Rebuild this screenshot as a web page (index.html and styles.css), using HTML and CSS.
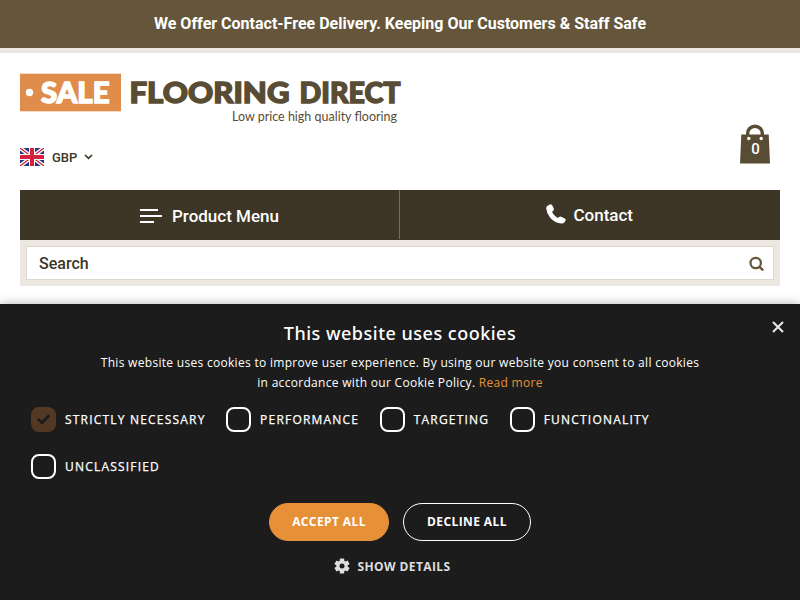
FILE: index.html
```html
<!DOCTYPE html>
<html lang="en">
<head>
	<meta charset="utf-8">
	<title>Sale Flooring Direct</title>
	<link rel="stylesheet" href="styles.css">
</head>
<body>
	<div class="promo-bar">We Offer Contact-Free Delivery. Keeping Our Customers &amp; Staff Safe</div>

	<header class="header">
		<a class="logo" href="#">
			<svg width="384" height="54" viewBox="0 0 384 54">
				<rect x="0" y="0.7" width="101" height="37.6" fill="#e08c4a"/>
				<circle cx="9.5" cy="19.5" r="3.7" fill="#fff"/>
				<text class="logo-name" x="21" y="30" textLength="68.5" lengthAdjust="spacingAndGlyphs" fill="#fff" stroke="#fff">SALE</text>
				<text class="logo-name" x="109.5" y="30" textLength="160" lengthAdjust="spacingAndGlyphs" fill="#594c34" stroke="#594c34">FLOORING</text>
				<text class="logo-name" x="279.5" y="30" textLength="101" lengthAdjust="spacingAndGlyphs" fill="#594c34" stroke="#594c34">DIRECT</text>
				<text class="logo-tag" x="212" y="48" textLength="165" lengthAdjust="spacingAndGlyphs" fill="#594c34">Low price high quality flooring</text>
			</svg>
		</a>

		<div class="tools">
			<div class="currency">
				<svg class="flag" width="24" height="18" viewBox="0 0 24 18">
					<rect width="24" height="18" fill="#29337a"/>
					<path d="M0 0L24 18M24 0L0 18" stroke="#fff" stroke-width="4"/>
					<path d="M0 0L24 18M24 0L0 18" stroke="#d3233f" stroke-width="1.3"/>
					<path d="M12 0V18M0 9H24" stroke="#fff" stroke-width="6"/>
					<path d="M12 0V18M0 9H24" stroke="#d3233f" stroke-width="4"/>
				</svg>
				<span>GBP</span>
				<svg width="9" height="6" viewBox="0 0 9 6"><path d="M1 1L4.5 4.4L8 1" fill="none" stroke="#3d3525" stroke-width="1.7"/></svg>
			</div>
			<a class="basket" href="#">
				<svg width="30" height="40" viewBox="0 0 30 40">
					<path d="M7.7 14V9.2a7.3 7 0 0 1 14.6 0V14" fill="none" stroke="#594c34" stroke-width="3.4"/>
					<path d="M1.3 10.5H28.7L30 39.5H0Z" fill="#594c34"/>
					<circle cx="8.8" cy="14.5" r="1.7" fill="#fff"/>
					<circle cx="21.2" cy="14.5" r="1.7" fill="#fff"/>
				</svg>
				<span class="basket-count">0</span>
			</a>
		</div>

		<nav class="nav">
			<a class="nav-item nav-menu" href="#">
				<svg width="22" height="14" viewBox="0 0 22 14"><path d="M0 1H18M0 7H22M0 13H14" stroke="#fff" stroke-width="2"/></svg>
				<span>Product Menu</span>
			</a>
			<a class="nav-item nav-contact" href="#">
				<svg width="20" height="20" viewBox="0 0 20 20"><path d="M1.2 1.9L3.8 0.4Q5.2 0 6 1.1L7.8 4.5Q8.2 5.7 7.4 6.5L6 8Q7.8 11.6 11.5 13.9L13.4 12.8Q14.2 12.3 15.1 12.7L18.9 14.6Q20 15.3 19.6 16.5L18.3 18.6Q17.5 19.6 15.4 19.5Q9 19 4.4 13.9Q0.5 9.2 0.2 4.4Q0.2 2.7 1.2 1.9Z" fill="#fff"/></svg>
				<span>Contact</span>
			</a>
		</nav>

		<form class="search">
			<div class="search-box">
				<span>Search</span>
				<svg width="15" height="15" viewBox="0 0 15 15"><circle cx="6.7" cy="7" r="5.2" fill="none" stroke="#65563b" stroke-width="2.2"/><path d="M10.3 10.6L14.2 14.4" stroke="#65563b" stroke-width="2.5"/></svg>
			</div>
		</form>
	</header>

	<div class="cookie">
		<button class="cookie-close" type="button" aria-label="Close">
			<svg width="12" height="12" viewBox="0 0 12 12"><path d="M1 1L11 11M11 1L1 11" stroke="#e6e6e6" stroke-width="2.1"/></svg>
		</button>
		<h2 class="cookie-title">This website uses cookies</h2>
		<p class="cookie-text">This website uses cookies to improve user experience. By using our website you consent to all cookies<br>in accordance with our Cookie Policy. <a href="#">Read more</a></p>

		<div class="cookie-options">
			<label class="option">
				<span class="box checked"><svg width="13" height="11" viewBox="0 0 13 11"><path d="M1.4 5.6L4.8 8.8L11.6 2" fill="none" stroke="#1c1c1c" stroke-width="2.7" stroke-linecap="round"/></svg></span>
				<span class="option-name">Strictly necessary</span>
			</label>
			<label class="option"><span class="box"></span><span class="option-name">Performance</span></label>
			<label class="option"><span class="box"></span><span class="option-name">Targeting</span></label>
			<label class="option"><span class="box"></span><span class="option-name">Functionality</span></label>
			<label class="option"><span class="box"></span><span class="option-name">Unclassified</span></label>
		</div>

		<div class="cookie-buttons">
			<button class="btn btn-accept" type="button">Accept all</button>
			<button class="btn btn-decline" type="button">Decline all</button>
		</div>

		<div class="cookie-details">
			<svg width="16" height="16" viewBox="0 0 16 16">
				<g fill="#dedede">
					<circle cx="8" cy="8" r="5.7"/>
					<rect x="5.8" y="0.4" width="4.4" height="15.2" rx="0.7"/>
					<rect x="5.8" y="0.4" width="4.4" height="15.2" rx="0.7" transform="rotate(60 8 8)"/>
					<rect x="5.8" y="0.4" width="4.4" height="15.2" rx="0.7" transform="rotate(120 8 8)"/>
				</g>
				<circle cx="8" cy="8" r="2.5" fill="#1c1c1c"/>
			</svg>
			<span>Show details</span>
		</div>
	</div>
</body>
</html>
```
FILE: styles.css
```css
* {
	box-sizing: border-box;
}

body {
	margin: 0;
	height: 600px;
	overflow: hidden;
	background: #fff;
	font-family: Roboto, sans-serif;
	color: #3d3525;
}

a {
	color: inherit;
	text-decoration: none;
}

svg {
	display: block;
	flex: none;
}

.promo-bar {
	height: 53px;
	border-bottom: 5px solid #ece8e1;
	background: #65563b;
	color: #fff;
	font-size: 16px;
	font-weight: 700;
	line-height: 47px;
	text-align: center;
}

.header {
	height: 251px;
	padding: 20px 20px 0;
}

.logo {
	display: block;
	height: 51px;
}

.logo-name {
	font-family: Lato, sans-serif;
	font-size: 29px;
	font-weight: 900;
	stroke-width: 1.4px;
}

.logo-tag {
	font-family: Lato, sans-serif;
	font-size: 13px;
}

.tools {
	display: flex;
	justify-content: space-between;
	height: 66px;
	padding-right: 10px;
}

.currency {
	display: flex;
	align-items: center;
	height: 18px;
	margin-top: 24px;
	font-size: 13px;
	font-weight: 500;
}

.currency span {
	margin: 0 7px 0 8px;
}

.basket {
	position: relative;
	width: 30px;
	height: 40px;
}

.basket-count {
	position: absolute;
	top: 15px;
	left: 0;
	width: 31px;
	color: #fff;
	font-size: 15px;
	font-weight: 500;
	line-height: 20px;
	text-align: center;
}

/* main navigation */
.nav {
	display: flex;
	height: 50px;
	background: #3d3525;
	color: #fff;
	font-size: 17px;
	font-weight: 500;
}

.nav-item {
	display: flex;
	align-items: center;
	justify-content: center;
	width: 380px;
	height: 50px;
}

.nav-menu {
	height: 49px;
	padding-top: 3px;
	border-right: 1px solid #776d5b;
}

.nav-menu span {
	margin-left: 10px;
}

.nav-contact {
	padding-right: 1px;
}

.nav-contact svg {
	margin-top: -3px;
}

.nav-contact span {
	margin-left: 7.5px;
}

.search {
	height: 46px;
	padding: 6px;
	background: #ece8e1;
}

.search-box {
	display: flex;
	align-items: center;
	justify-content: space-between;
	height: 34px;
	padding: 0 9px 0 12px;
	border: 1px solid #ded8ce;
	background: #fff;
	font-size: 16px;
	font-weight: 500;
}

/* cookie consent */
.cookie {
	position: relative;
	height: 296px;
	padding-top: 17px;
	background: #1c1c1c;
	box-shadow: 0 0 10px rgba(0, 0, 0, 0.3);
	color: #fff;
	font-family: "Open Sans", sans-serif;
}

.cookie-close {
	position: absolute;
	top: 17px;
	right: 16px;
	padding: 0;
	border: none;
	background: none;
}

.cookie-title {
	margin: 0;
	font-family: "Noto Sans", sans-serif;
	font-size: 18px;
	font-weight: 500;
	line-height: 25px;
	letter-spacing: 0.5px;
	text-align: center;
}

.cookie-text {
	margin: 7px 0 0;
	font-size: 12px;
	line-height: 20px;
	letter-spacing: 0.3px;
	text-align: center;
	white-space: nowrap;
}

.cookie-text a {
	color: #e69138;
}

.cookie-options {
	display: flex;
	flex-wrap: wrap;
	row-gap: 22px;
	column-gap: 20.5px;
	margin-top: 14px;
	padding: 0 31px;
}

.option {
	display: flex;
	align-items: center;
	height: 25px;
}

.box {
	display: flex;
	align-items: center;
	justify-content: center;
	width: 25px;
	height: 25px;
	border: 2px solid #fff;
	border-radius: 8px;
}

.checked {
	border-color: #533823;
	background: #533823;
}

.option-name {
	margin-left: 9px;
	font-size: 12px;
	letter-spacing: 1.2px;
	text-transform: uppercase;
	-webkit-text-stroke: 0.25px #fff;
}

.cookie-buttons {
	display: flex;
	gap: 14px;
	margin-top: 24px;
	padding-left: 269px;
}

.btn {
	height: 38px;
	padding: 0 0 1px;
	border: 1px solid #fff;
	border-radius: 19px;
	background: none;
	color: #fff;
	font-family: inherit;
	font-size: 12px;
	font-weight: 700;
	letter-spacing: 0.4px;
	text-transform: uppercase;
}

.btn-accept {
	width: 120px;
	border-color: #e69138;
	background: #e69138;
}

.btn-decline {
	width: 128px;
}

.cookie-details {
	display: flex;
	align-items: center;
	gap: 8px;
	height: 16px;
	margin-top: 17px;
	padding-left: 333.5px;
	color: #dedede;
	font-size: 12px;
	font-weight: 700;
	letter-spacing: 0.4px;
	text-transform: uppercase;
}
```
